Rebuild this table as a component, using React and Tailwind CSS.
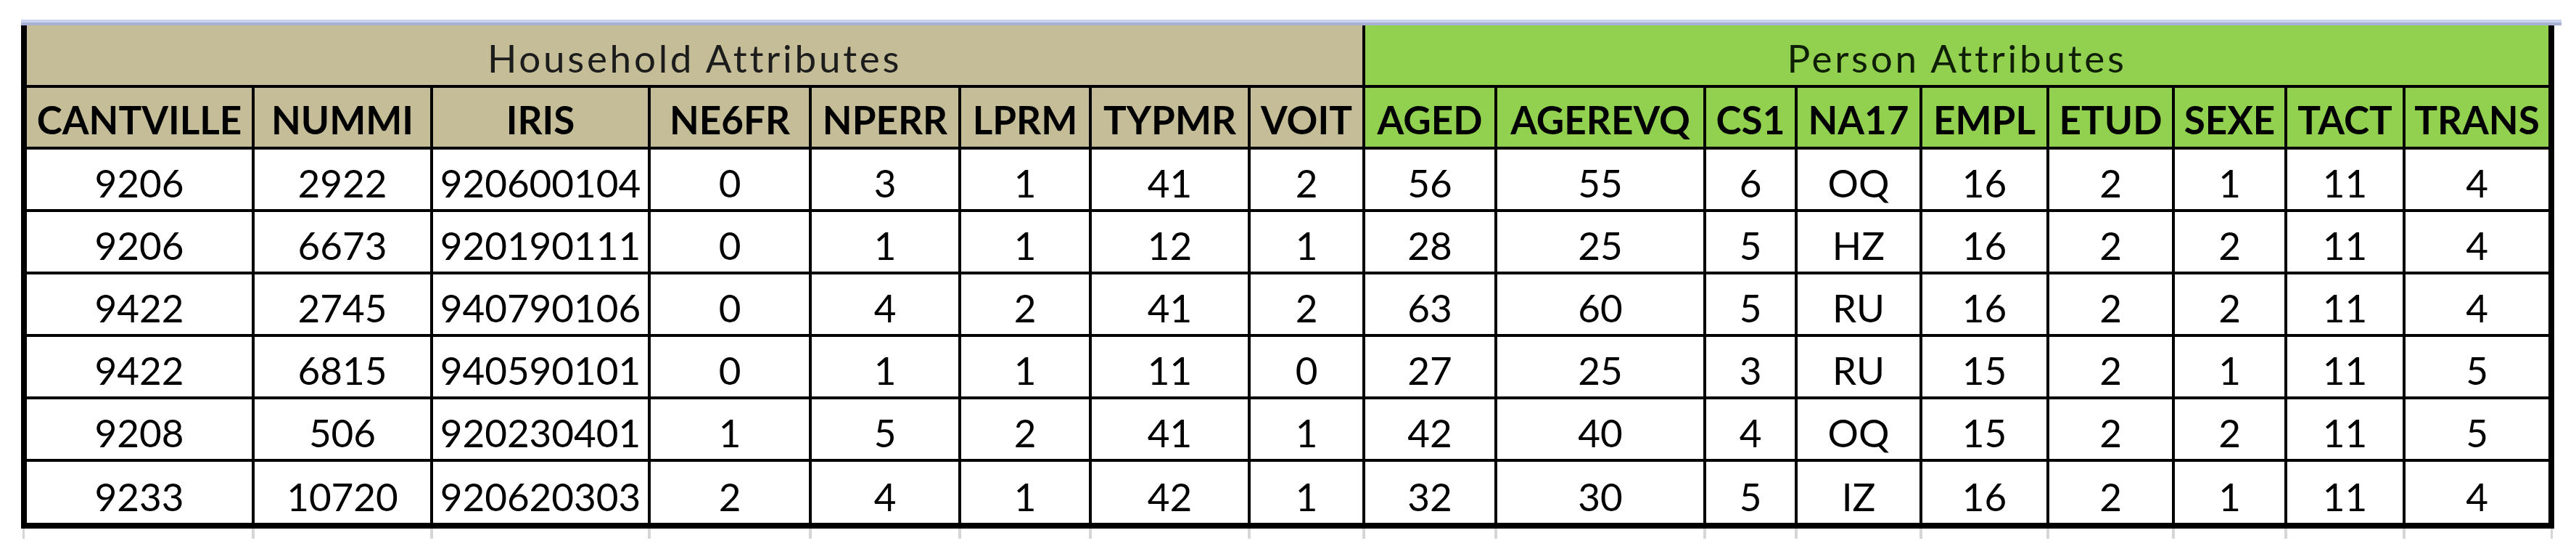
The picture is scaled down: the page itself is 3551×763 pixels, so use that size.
import React from 'react';

const household = ['CANTVILLE', 'NUMMI', 'IRIS', 'NE6FR', 'NPERR', 'LPRM', 'TYPMR', 'VOIT'];
const person = ['AGED', 'AGEREVQ', 'CS1', 'NA17', 'EMPL', 'ETUD', 'SEXE', 'TACT', 'TRANS'];

const rows = [
    ['9206', '2922', '920600104', '0', '3', '1', '41', '2', '56', '55', '6', 'OQ', '16', '2', '1', '11', '4'],
    ['9206', '6673', '920190111', '0', '1', '1', '12', '1', '28', '25', '5', 'HZ', '16', '2', '2', '11', '4'],
    ['9422', '2745', '940790106', '0', '4', '2', '41', '2', '63', '60', '5', 'RU', '16', '2', '2', '11', '4'],
    ['9422', '6815', '940590101', '0', '1', '1', '11', '0', '27', '25', '3', 'RU', '15', '2', '1', '11', '5'],
    ['9208', '506', '920230401', '1', '5', '2', '41', '1', '42', '40', '4', 'OQ', '15', '2', '2', '11', '5'],
    ['9233', '10720', '920620303', '2', '4', '1', '42', '1', '32', '30', '5', 'IZ', '16', '2', '1', '11', '4'],
];

const cols = 'grid-cols-[310px_242px_296px_218px_202px_176px_215px_154px_178px_284px_122px_168px_171px_169px_151px_159px_197px]';

export default function App() {
    return (
        <div className="w-[3551px] h-[763px] bg-white pt-[27px] pl-[29px] font-[Lato,sans-serif] text-black overflow-hidden">
            {/* strip above the table */}
            <div className="w-[3502px] flex flex-col">
                <div className="h-[4px] bg-[#c9d3ef]" />
                <div className="h-[4px] bg-[#a9b1d2]" />
            </div>

            {/* Table */}
            <div className={`w-[3492px] grid ${cols} grid-rows-[82px_81px_82px_82px_82px_82px_82px_84px] gap-[4px] bg-black px-[8px] pb-[8px]`}>
                <div className="col-span-8 bg-[#c4bd97] flex items-end justify-center pb-[11px] text-[53px] leading-[53px] tracking-[3.7px] text-[#1c1c1c]">
                    Household Attributes
                </div>
                <div className="col-span-9 bg-[#92d050] flex items-end justify-center pb-[11px] text-[53px] leading-[53px] tracking-[3.7px] text-[#0f1f05]">
                    Person Attributes
                </div>

                {household.map((h) => (
                    <div key={h} className="bg-[#c4bd97] flex items-end justify-center pb-[11px] text-[53px] leading-[53px] font-bold">
                        {h}
                    </div>
                ))}
                {person.map((h) => (
                    <div key={h} className="bg-[#92d050] flex items-end justify-center pb-[11px] text-[53px] leading-[53px] font-bold">
                        {h}
                    </div>
                ))}

                {rows.map((row, r) =>
                    row.map((v, c) => (
                        <div key={`${r}-${c}`} className="bg-white flex items-end justify-center pb-[10px] text-[53px] leading-[53px]">
                            {v}
                        </div>
                    ))
                )}
            </div>

            {/* grid stubs below */}
            <div className="w-[3492px] h-[14px] flex">
                <div className="w-[2px]" />
                <div className="w-[3px] bg-[#d6d6d6]" />
                <div className="w-[3px]" />
                <div className={`grid ${cols} gap-x-[4px] bg-[#d6d6d6]`}>
                    {household.concat(person).map((h) => (
                        <div key={h} className="bg-white" />
                    ))}
                </div>
                <div className="w-[3px]" />
                <div className="w-[3px] bg-[#d6d6d6]" />
            </div>
        </div>
    );
}
